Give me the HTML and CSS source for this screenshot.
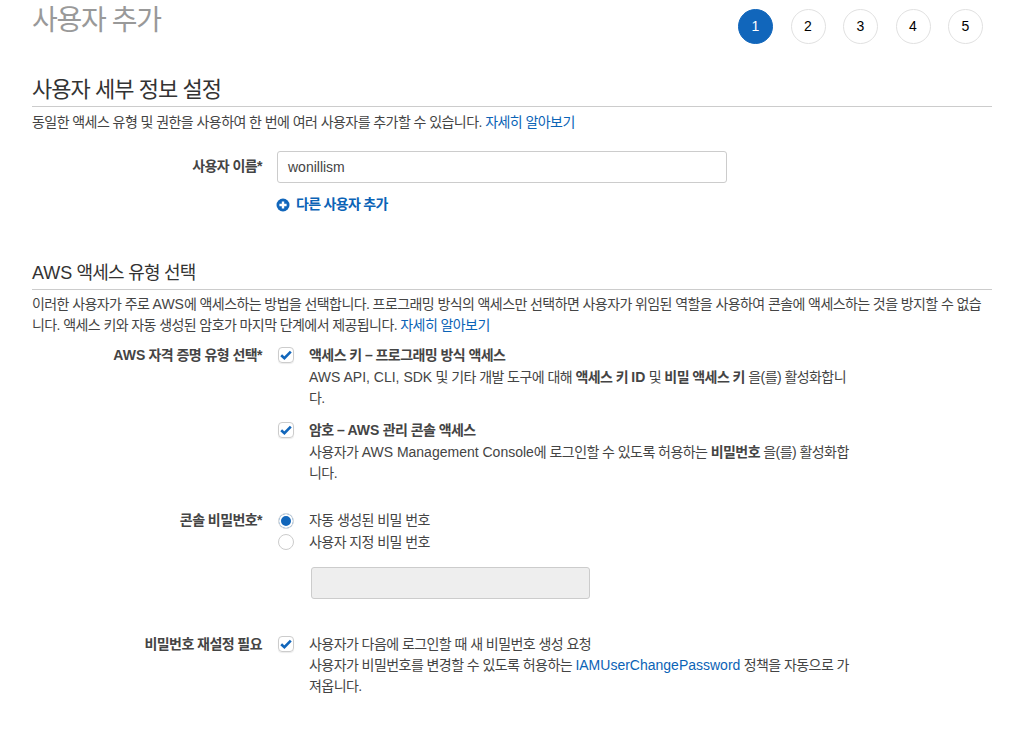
FILE: index.html
```html
<!DOCTYPE html>
<html lang="ko">
<head>
<meta charset="utf-8">
<title>사용자 추가</title>
<link rel="stylesheet" href="styles.css">
</head>
<body>
<main class="page">
  <header class="top">
    <h1 class="title">사용자 추가</h1>
    <ol class="steps">
      <li class="step step-on">1</li>
      <li class="step">2</li>
      <li class="step">3</li>
      <li class="step">4</li>
      <li class="step">5</li>
    </ol>
  </header>

  <section class="sec-one">
    <h2 class="sec-title">사용자 세부 정보 설정</h2>
    <p class="sec-desc">동일한 액세스 유형 및 권한을 사용하여 한 번에 여러 사용자를 추가할 수 있습니다. <a class="link" href="#">자세히 알아보기</a></p>
    <div class="row row-name">
      <div class="label label-name">사용자 이름*</div>
      <div class="control">
        <div class="input">wonillism</div>
        <a class="add" href="#">
          <svg class="add-icon" viewBox="0 0 14 14" width="14" height="14"><circle cx="7" cy="7" r="6.5" fill="#1166bb"/><path d="M7 3.4v7.2M3.4 7h7.2" stroke="#fff" stroke-width="2.4" fill="none"/></svg>
          <span>다른 사용자 추가</span>
        </a>
      </div>
    </div>
  </section>

  <section class="sec-two">
    <h2 class="sec-title sec-title-two"><span class="en">AWS</span> 액세스 유형 선택</h2>
    <p class="sec-desc sec-desc-two">이러한 사용자가 주로 <span class="en">AWS</span>에 액세스하는 방법을 선택합니다. 프로그래밍 방식의 액세스만 선택하면 사용자가 위임된 역할을 사용하여 콘솔에 액세스하는 것을 방지할 수 없습<br>니다. 액세스 키와 자동 생성된 암호가 마지막 단계에서 제공됩니다. <a class="link" href="#">자세히 알아보기</a></p>

    <div class="row row-cred">
      <div class="label"><span class="en">AWS</span> 자격 증명 유형 선택*</div>
      <div class="control">
        <div class="opt">
          <span class="check"><svg viewBox="0 0 12 10" width="12" height="10"><path d="M1.2 5.2 4.4 8.2 10.8 1.6" fill="none" stroke="#1166bb" stroke-width="2.6"/></svg></span>
          <div class="opt-text">
            <strong>액세스 키 – 프로그래밍 방식 액세스</strong><br>
            <span class="en">AWS API, CLI, SDK</span> 및 기타 개발 도구에 대해 <strong>액세스 키 <span class="en">ID</span></strong> 및 <strong>비밀 액세스 키</strong> 을(를) 활성화합니<br>다.
          </div>
        </div>
        <div class="opt opt-second">
          <span class="check"><svg viewBox="0 0 12 10" width="12" height="10"><path d="M1.2 5.2 4.4 8.2 10.8 1.6" fill="none" stroke="#1166bb" stroke-width="2.6"/></svg></span>
          <div class="opt-text">
            <strong>암호 – <span class="en">AWS</span> 관리 콘솔 액세스</strong><br>
            사용자가 <span class="en">AWS Management Console</span>에 로그인할 수 있도록 허용하는 <strong>비밀번호</strong> 을(를) 활성화합<br>니다.
          </div>
        </div>
      </div>
    </div>

    <div class="row row-pass">
      <div class="label">콘솔 비밀번호*</div>
      <div class="control">
        <div class="radio-line"><span class="radio radio-on"></span><span class="opt-text">자동 생성된 비밀 번호</span></div>
        <div class="radio-line"><span class="radio"></span><span class="opt-text">사용자 지정 비밀 번호</span></div>
        <div class="input-off"></div>
      </div>
    </div>

    <div class="row row-reset">
      <div class="label">비밀번호 재설정 필요</div>
      <div class="control">
        <div class="opt">
          <span class="check"><svg viewBox="0 0 12 10" width="12" height="10"><path d="M1.2 5.2 4.4 8.2 10.8 1.6" fill="none" stroke="#1166bb" stroke-width="2.6"/></svg></span>
          <div class="opt-text opt-text-last">
            사용자가 다음에 로그인할 때 새 비밀번호 생성 요청<br>
            사용자가 비밀번호를 변경할 수 있도록 허용하는 <a class="link en" href="#">IAMUserChangePassword</a> 정책을 자동으로 가<br>져옵니다.
          </div>
        </div>
      </div>
    </div>
  </section>
</main>
</body>
</html>
```

FILE: styles.css
```css
* { box-sizing: border-box; }
html, body { margin: 0; padding: 0; background: #fff; }
body {
  font-family: "Liberation Sans", "Noto Sans CJK KR", sans-serif;
  font-size: 14px;
  letter-spacing: -0.56px;
  line-height: 21px;
  color: #444;
}
.en { letter-spacing: 0; }
.page { width: 992px; padding-left: 32px; height: 748px; overflow: hidden; }
.top { display: flex; justify-content: space-between; height: 76px; padding-right: 9px; }
.title { margin: 1px 0 0; font-size: 28px; letter-spacing: -1.3px; line-height: 40px; font-weight: 400; color: #999; }
.steps { display: flex; gap: 17.5px; list-style: none; margin: 9px 0 0; padding: 0; }
.step {
  width: 35px; height: 35px; border-radius: 50%;
  border: 1px solid #e1e1e1; color: #000; font-size: 14px; letter-spacing: 0;
  display: flex; align-items: center; justify-content: center;
}
.step-on { background: #1166bb; border-color: #1166bb; color: #fff; }
.sec-title {
  margin: 0; font-size: 22px; letter-spacing: -0.95px; line-height: 28px; font-weight: 400; color: #333;
  border-bottom: 1px solid #ccc; height: 31px;
}
.sec-desc { margin: 5px 0 0; }
.link { color: #0b63b6; text-decoration: none; }
.row { display: flex; }
.label { width: 230px; text-align: right; font-weight: 700; flex: none; }
.control { margin-left: 15px; flex: none; }
.row-name { margin-top: 18px; }
.label-name { padding-top: 5px; }
.input {
  width: 450px; height: 32px; border: 1px solid #ccc; border-radius: 3px;
  padding: 0 10px; font-size: 14px; letter-spacing: 0; line-height: 30px; color: #444;
}
.add { display: flex; align-items: center; gap: 6px; margin: 11px 0 0 -1px; letter-spacing: -0.7px; color: #0b63b6; font-weight: 700; text-decoration: none; }
.sec-two { margin-top: 45px; }
.sec-title-two { font-size: 18px; letter-spacing: -0.78px; line-height: 26px; height: 30px; }
.sec-desc-two { margin-top: 4px; letter-spacing: -0.585px; }
.row-cred { margin-top: 9px; }
.opt { display: flex; }
.opt-second { margin-top: 10.5px; }
.opt-text { width: 560px; margin-left: 15px; line-height: 21.5px; }
.opt-text-last { line-height: 21px; }
.check {
  flex: none; width: 16px; height: 16px; margin: 2px 0 0 1px; border: 1px solid #ccc; border-radius: 4px;
  box-shadow: 0 1px 1px rgba(0, 0, 0, 0.08);
  display: flex; align-items: center; justify-content: center;
}
.row-pass { margin-top: 25.5px; }
.radio-line { display: flex; align-items: center; }
.radio { flex: none; width: 16px; height: 16px; margin-left: 1px; border: 1px solid #ccc; border-radius: 50%; }
.radio-on { border: 1px solid #ddd; background: #1166bb; box-shadow: inset 0 0 0 2px #fff; }
.input-off {
  width: 279px; height: 32px; margin: 14px 0 0 34px; background: #eee;
  border: 1px solid #ccc; border-radius: 3px;
}
.row-reset { margin-top: 35px; }
```
